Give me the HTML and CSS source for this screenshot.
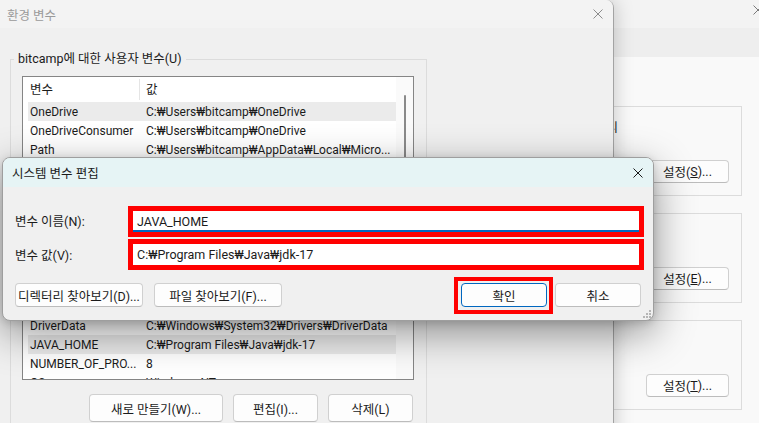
FILE: index.html
```html
<!DOCTYPE html>
<html lang="ko">
<head>
<meta charset="utf-8">
<title>환경 변수</title>
<link rel="stylesheet" href="styles.css">
</head>
<body>
<div class="desktop">

  <section class="win sysprops">
    <header class="sp-title">
      <span class="sp-name">시스템 속성</span>
      <svg class="close" width="10" height="10" viewBox="0 0 10 10"><path d="M0.5 0.5L9.5 9.5M9.5 0.5L0.5 9.5" stroke="#7a7a7a" stroke-width="1"/></svg>
    </header>
    <div class="sp-tabs"></div>
    <div class="sp-body">
      <div class="sp-group">
        <div class="sp-desc"><span>시각 효과, 프로세서 일정, 메모리 사용 및 가상 메모리</span></div>
        <button class="btn sp-btn">설정(<u>S</u>)...</button>
      </div>
      <div class="sp-group">
        <button class="btn sp-btn">설정(<u>E</u>)...</button>
      </div>
      <div class="sp-group">
        <button class="btn sp-btn">설정(<u>T</u>)...</button>
      </div>
    </div>
  </section>

  <section class="win envwin">
    <header class="env-title">
      <span>환경 변수</span>
      <svg class="close" width="10" height="10" viewBox="0 0 10 10"><path d="M0.5 0.5L9.5 9.5M9.5 0.5L0.5 9.5" stroke="#8c8c8c" stroke-width="1"/></svg>
    </header>
    <div class="env-body">
      <div class="grp grp-user">
        <div class="grp-label">bitcamp에 대한 사용자 변수(U)</div>
        <div class="list list-user">
          <div class="list-main">
            <div class="row head"><span class="c1">변수</span><span class="c2">값</span></div>
            <div class="row sel"><span class="c1">OneDrive</span><span class="c2">C:₩Users₩bitcamp₩OneDrive</span></div>
            <div class="row"><span class="c1">OneDriveConsumer</span><span class="c2">C:₩Users₩bitcamp₩OneDrive</span></div>
            <div class="row"><span class="c1">Path</span><span class="c2">C:₩Users₩bitcamp₩AppData₩Local₩Micro...</span></div>
            <div class="row"><span class="c1">TEMP</span><span class="c2">C:₩Users₩bitcamp₩AppData₩Local₩Temp</span></div>
            <div class="row"><span class="c1">TMP</span><span class="c2">C:₩Users₩bitcamp₩AppData₩Local₩Temp</span></div>
          </div>
          <div class="track"><div class="thumb"></div></div>
        </div>
        <div class="btn-row">
          <button class="btn b-new">새로 만들기(N)...</button>
          <button class="btn b-sm">편집(E)...</button>
          <button class="btn b-sm">삭제(D)</button>
        </div>
      </div>

      <div class="grp grp-sys">
        <div class="grp-label">시스템 변수(S)</div>
        <div class="list list-sys">
          <div class="list-main">
            <div class="row head"><span class="c1">변수</span><span class="c2">값</span></div>
            <div class="row"><span class="c1">DriverData</span><span class="c2">C:₩Windows₩System32₩Drivers₩DriverData</span></div>
            <div class="row sel"><span class="c1">JAVA_HOME</span><span class="c2">C:₩Program Files₩Java₩jdk-17</span></div>
            <div class="row"><span class="c1">NUMBER_OF_PRO...</span><span class="c2">8</span></div>
            <div class="row"><span class="c1">OS</span><span class="c2">Windows_NT</span></div>
          </div>
          <div class="track"></div>
        </div>
        <div class="btn-row">
          <button class="btn b-new">새로 만들기(W)...</button>
          <button class="btn b-sm">편집(I)...</button>
          <button class="btn b-sm">삭제(L)</button>
        </div>
      </div>
    </div>
  </section>

  <section class="win editdlg">
    <header class="dlg-title">
      <span>시스템 변수 편집</span>
      <svg class="close" width="10" height="10" viewBox="0 0 10 10"><path d="M0.5 0.5L9.5 9.5M9.5 0.5L0.5 9.5" stroke="#1a1a1a" stroke-width="1"/></svg>
    </header>
    <div class="dlg-body">
      <div class="form">
        <label class="lbl">변수 이름(N):</label>
        <div class="hl-field"><div class="field focus">JAVA_HOME</div></div>
        <label class="lbl lbl2">변수 값(V):</label>
        <div class="hl-field"><div class="field">C:₩Program Files₩Java₩jdk-17</div></div>
      </div>
      <div class="dlg-btns">
        <div class="left-btns">
          <button class="btn b-browse">디렉터리 찾아보기(D)...</button>
          <button class="btn b-browse">파일 찾아보기(F)...</button>
        </div>
        <div class="right-btns">
          <div class="hl-btn"><button class="btn b-ok default">확인</button></div>
          <button class="btn b-ok">취소</button>
        </div>
      </div>
    </div>
    <svg class="grip" width="8" height="8" viewBox="0 0 8 8">
      <rect x="6" y="0" width="2" height="2" fill="#b5b5b5"/>
      <rect x="3" y="3" width="2" height="2" fill="#b5b5b5"/>
      <rect x="6" y="3" width="2" height="2" fill="#b5b5b5"/>
      <rect x="0" y="6" width="2" height="2" fill="#b5b5b5"/>
      <rect x="3" y="6" width="2" height="2" fill="#b5b5b5"/>
      <rect x="6" y="6" width="2" height="2" fill="#b5b5b5"/>
    </svg>
  </section>

</div>
</body>
</html>
```

FILE: styles.css
```css
* { box-sizing: border-box; }

html, body {
  margin: 0;
  padding: 0;
}

body {
  width: 759px;
  height: 423px;
  overflow: hidden;
  background: #f9f9f9;
  font-family: Roboto, "Noto Sans", "Noto Sans CJK KR", sans-serif;
  font-size: 12.5px;
  color: #1b1b1b;
}

.desktop {
  position: relative;
  width: 759px;
  height: 423px;
  overflow: hidden;
}

.win {
  position: absolute;
}

.close { display: block; flex: none; }

/* generic button */
.btn {
  font: inherit;
  color: #1b1b1b;
  height: 24px;
  padding: 0;
  border: 1px solid #d0d0d0;
  border-bottom-color: #bcbcbc;
  border-radius: 4px;
  background: #fdfdfd;
  display: flex;
  align-items: center;
  justify-content: center;
  white-space: nowrap;
}
.btn u { text-underline-offset: 1px; }
.btn.default { border-color: #0067c0; }

/* ---------- system properties (behind) ---------- */
.sysprops {
  left: 520px;
  top: 0;
  width: 262px;
  height: 440px;
  background: #f9f9f9;
}
.sp-title {
  height: 28px;
  background: #f3f3f3;
  display: flex;
  justify-content: space-between;
  align-items: flex-start;
  padding: 5px 19px 0 12px;
}
.sp-name { color: #999; line-height: 16px; }
.sp-tabs {
  height: 29px;
  background: #eeeeee;
}
.sp-body {
  padding: 49px 40px 0 20px;
  display: flex;
  flex-direction: column;
  gap: 17px;
}
.sp-group {
  height: 90px;
  border: 1px solid #dcdcdc;
  padding: 0 12px 12px 12px;
  display: flex;
  flex-direction: column;
}
.sp-desc {
  margin-top: 13px;
  line-height: 16px;
  display: flex;
  justify-content: flex-end;
  padding-right: 111px;
  white-space: nowrap;
}
.sp-desc span { flex: none; }
.sp-btn {
  margin-top: auto;
  align-self: flex-end;
  width: 83px;
  height: 23px;
}

/* ---------- environment variables window ---------- */
.envwin {
  left: 0;
  top: 0;
  width: 614px;
  height: 470px;
  background: #f0f0f0;
  border-right: 1px solid #a3a3a3;
  border-top-right-radius: 8px;
  overflow: hidden;
  box-shadow: 0 0 20px rgba(0, 0, 0, 0.22);
}
.env-title {
  height: 28px;
  background: #f3f3f3;
  display: flex;
  align-items: center;
  justify-content: space-between;
  padding: 0 10px 0 7px;
  color: #9a9a9a;
}
.env-body {
  padding: 31px 0 0 10px;
}
.grp {
  width: 417px;
  border: 1px solid #dcdcdc;
  padding: 0 12px 10px 11px;
}
.grp-label {
  width: fit-content;
  margin: -9px 0 0 -8px;
  padding: 0 4px;
  line-height: 16px;
  background: #f0f0f0;
  color: #1b1b1b;
}
.grp-sys { margin-top: 19px; }

.list {
  margin-top: 9px;
  border: 1px solid #858585;
  background: #fff;
  display: flex;
  overflow: hidden;
}
.list-user { height: 125px; }
.list-sys { height: 90px; }
.list-main {
  flex: 1;
  min-width: 0;
  padding-left: 5px;
}
.row {
  display: grid;
  grid-template-columns: 111px 1fr;
  height: 19px;
  padding-top: 1px;
  line-height: 18px;
  font-size: 12px;
  white-space: nowrap;
}
.row span {
  overflow: hidden;
  text-overflow: ellipsis;
}
.row .c1 { padding-left: 2px; }
.row .c2 { padding-left: 7px; }
.row.head {
  height: 25px;
  padding: 2px 0;
  line-height: 21px;
  font-size: 12.5px;
}
.row.head .c2 {
  border-left: 1px solid #e5e5e5;
  padding-left: 6px;
}
.row.sel { background: #ebebeb; }
.track {
  width: 17px;
  flex: none;
  background: #fafafa;
  padding: 18px 0 0 8px;
}
.thumb {
  width: 2px;
  height: 90px;
  border-radius: 1px;
  background: #8a8a8a;
}
.btn-row {
  display: flex;
  justify-content: flex-end;
  gap: 10px;
  margin-top: 14px;
  padding-right: 1px;
}
.btn-row .btn { height: 28px; }
.b-new { width: 134px; }
.b-sm { width: 85px; }

/* ---------- edit dialog (front) ---------- */
.editdlg {
  left: 2px;
  top: 157px;
  width: 652px;
  height: 164px;
  border: 1px solid #9e9e9e;
  border-radius: 8px;
  background: #f0f0f0;
  overflow: hidden;
  box-shadow: 0 12px 40px rgba(0, 0, 0, 0.42), 0 2px 8px rgba(0, 0, 0, 0.14);
}
.dlg-title {
  height: 29px;
  background: #e6f4f5;
  display: flex;
  align-items: center;
  justify-content: space-between;
  padding: 0 10px 0 9px;
  color: #1a1a1a;
}
.dlg-body {
  padding: 19px 12px 13px 12px;
}
.form {
  display: grid;
  grid-template-columns: 116px 1fr;
  row-gap: 2px;
  align-items: center;
}
.lbl { line-height: 16px; }
.lbl2 { margin-top: 2px; }
.hl-field {
  border: 5px solid #ff0000;
  margin: 0 -3px;
}
.field {
  height: 21px;
  background: #fff;
  padding-left: 4px;
  line-height: 21px;
  white-space: nowrap;
}
.field.focus { box-shadow: inset 0 -2px 0 #0067c0; }

.dlg-btns {
  display: flex;
  justify-content: space-between;
  margin-top: 13px;
}
.left-btns { display: flex; gap: 11px; }
.right-btns { display: flex; gap: 8px; }
.b-browse { width: 128px; }
.b-ok { width: 86px; }
.hl-btn {
  display: flex;
  border: 4px solid #ff0000;
  padding: 2px 2px 3px 3px;
  margin: -6px -6px -7px -7px;
}
.grip {
  position: absolute;
  right: 2px;
  bottom: 2px;
}
```
